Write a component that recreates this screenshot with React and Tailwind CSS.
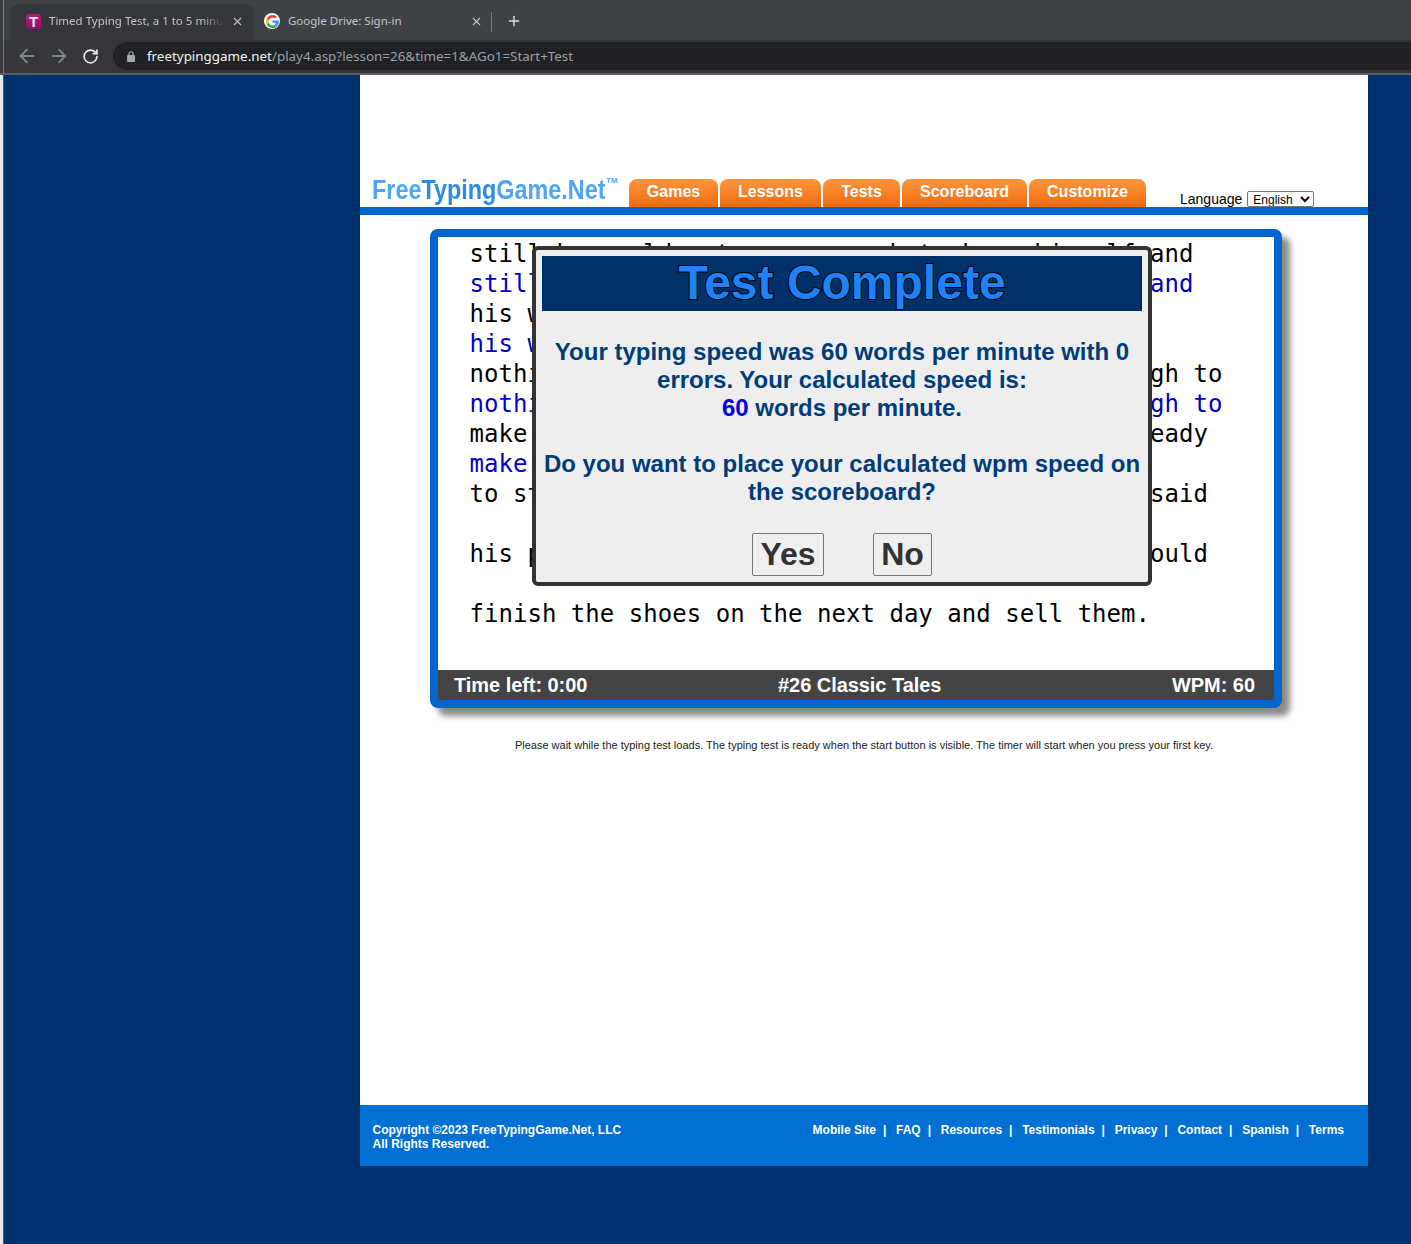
import React from "react";
import { ArrowLeft, ArrowRight, RotateCw, X, Plus } from "lucide-react";

const lines = [
  ["still he could not earn enough to keep himself and", "text-black"],
  ["still he could not earn enough to keep himself and", "text-[#0000c8]"],
  ["his wife. At last, they were very poor.", "text-black"],
  ["his wife. At last, they were very poor.", "text-[#0000c8]"],
  ["nothing left in the world but just leather enough to", "text-black"],
  ["nothing left in the world but just leather enough to", "text-[#0000c8]"],
  ["make one pair of shoes. He cut them out, then ready", "text-black"],
  ["make one pair of shoes.", "text-[#0000c8]"],
  ["to start on in the morning. Before bed he then said", "text-black"],
  [" ", "text-black"],
  ["his prayers and went to sleep, hoping that he would", "text-black"],
  [" ", "text-black"],
  ["finish the shoes on the next day and sell them.", "text-black"],
];

const tabs = [
  ["Games", "w-[89px]"],
  ["Lessons", "w-[101px]"],
  ["Tests", "w-[77px]"],
  ["Scoreboard", "w-[125px]"],
  ["Customize", "w-[117px]"],
];

const links = ["Mobile Site", "FAQ", "Resources", "Testimonials", "Privacy", "Contact", "Spanish"];

function GoogleG() {
  return (
    <span className="flex h-[16px] w-[16px] items-center justify-center rounded-full bg-white">
      <svg viewBox="0 0 48 48" className="h-[13px] w-[13px]">
        <path fill="#EA4335" d="M24 9.5c3.5 0 6.7 1.2 9.2 3.6l6.9-6.9C35.9 2.4 30.5 0 24 0 14.6 0 6.5 5.4 2.6 13.2l8 6.2C12.5 13.6 17.8 9.5 24 9.5z" />
        <path fill="#4285F4" d="M47 24.5c0-1.6-.1-3.1-.4-4.5H24v9h13c-.6 3-2.3 5.5-4.8 7.2l7.7 6C44.4 37.9 47 31.8 47 24.5z" />
        <path fill="#FBBC05" d="M10.5 28.6c-.5-1.4-.8-3-.8-4.6s.3-3.2.8-4.6l-8-6.2C.9 16.5 0 20.1 0 24s.9 7.5 2.6 10.8l7.9-6.2z" />
        <path fill="#34A853" d="M24 48c6.5 0 11.9-2.1 15.9-5.8l-7.7-6c-2.1 1.4-4.9 2.3-8.2 2.3-6.2 0-11.5-4.2-13.4-9.8l-8 6.2C6.5 42.6 14.6 48 24 48z" />
      </svg>
    </span>
  );
}

function LockIcon() {
  return (
    <svg viewBox="0 0 8 11" className="h-[11px] w-[8px] text-[#a6a9ab]">
      <path d="M2 4.5V2.8a2 2 0 0 1 4 0v1.7" fill="none" stroke="currentColor" strokeWidth="1.1" />
      <rect x="0" y="4" width="8" height="7" rx="1" fill="currentColor" />
    </svg>
  );
}

function BrowserChrome() {
  return (
    <div className="flex h-[75px] w-full shrink-0 overflow-hidden border-b-2 border-b-[#5a5c5f] bg-[#35363a] font-['Noto_Sans',sans-serif]">
      <div className="w-[3px] shrink-0 bg-[#3a3b3e]" />
      <div className="w-px shrink-0 bg-[#77797c]" />
      <div className="min-w-0 flex-1">
        <div className="flex h-[40px] items-end bg-[#3f4245] pl-[7px]">
          <div className="flex h-[36px] w-[242px] items-center rounded-t-[8px] bg-[#35363a] pb-[2px] pl-[15px] pr-[9px]">
            <span className="flex h-[15px] w-[15px] shrink-0 items-center justify-center rounded-[3px] bg-gradient-to-b from-[#b01e78] to-[#8c1464] font-['Liberation_Sans',sans-serif] text-[15px] font-bold leading-none text-[#f6e4ef]">T</span>
            <span className="ml-[8px] w-[174px] overflow-hidden whitespace-nowrap text-[11.5px] text-[#c4c7c9] [mask-image:linear-gradient(to_right,black_88%,transparent)]">Timed Typing Test, a 1 to 5 minute typing test</span>
            <X size={13} strokeWidth={2} className="ml-auto text-[#c4c7c9]" />
          </div>
          <div className="flex h-[36px] w-[238px] items-center pb-[2px] pl-[11px] pr-[8px]">
            <GoogleG />
            <span className="ml-[8px] whitespace-nowrap text-[11.5px] text-[#c4c7c9]">Google Drive: Sign-in</span>
            <X size={13} strokeWidth={2} className="ml-auto text-[#c4c7c9]" />
          </div>
          <div className="mb-[8px] h-[20px] w-px bg-[#74777a]" />
          <Plus size={16} strokeWidth={2} className="mb-[11px] ml-[14px] text-[#dfe1e3]" />
        </div>
        <div className="flex h-[32px] items-center pl-[12px]">
          <ArrowLeft size={22} strokeWidth={2} className="text-[#84878a]" />
          <ArrowRight size={22} strokeWidth={2} className="ml-[10px] text-[#84878a]" />
          <RotateCw size={17} strokeWidth={2.4} className="ml-[12px] text-[#e8eaed]" />
          <div className="ml-[14px] flex h-[28px] flex-1 items-center rounded-l-[14px] bg-[#202124] pl-[14px]">
            <LockIcon />
            <span className="ml-[12px] whitespace-nowrap text-[13.4px] text-[#9aa0a6]"><span className="text-[#f1f3f4]">freetypinggame.net</span>/play4.asp?lesson=26&amp;time=1&amp;AGo1=Start+Test</span>
          </div>
        </div>
      </div>
    </div>
  );
}

function Modal() {
  return (
    <div className="absolute left-[94px] top-[9px] flex h-[340px] w-[620px] flex-col items-center rounded-[6px] border-[4px] border-[#333333] bg-[#eeeeee] px-[6px] pt-[6px] text-center font-['Liberation_Sans',sans-serif] font-bold text-[#003c78]">
      <div className="h-[55px] w-[600px] shrink-0 bg-[#003068] text-[48px] leading-[54px] text-[#1e82fa] [-webkit-text-stroke:2px_#000000] [paint-order:stroke_fill]">Test Complete</div>
      <p className="mt-[27px] text-[24px] leading-[28px]">
        Your typing speed was 60 words per minute with 0<br />
        errors. Your calculated speed is:<br />
        <span className="text-[#0000e0]">60</span> words per minute.
      </p>
      <p className="mt-[28px] text-[24px] leading-[28px]">
        Do you want to place your calculated wpm speed on<br />
        the scoreboard?
      </p>
      <div className="mt-[27px] flex gap-[49px]">
        <button className="h-[43px] w-[72px] rounded-[2px] border border-[#777777] bg-[#efefef] pb-[2px] text-[32px] leading-none font-bold text-[#333333]">Yes</button>
        <button className="h-[43px] w-[59px] rounded-[2px] border border-[#777777] bg-[#efefef] pb-[2px] text-[32px] leading-none font-bold text-[#333333]">No</button>
      </div>
    </div>
  );
}

function GameBox() {
  return (
    <div className="relative ml-[70px] mt-[14px] flex h-[479px] w-[852px] flex-col rounded-[8px] border-[8px] border-[#0066cc] bg-white shadow-[8px_8px_6px_#8a8a8a]">
      <div className="flex-1 overflow-hidden pl-[31.5px] pt-[2px] font-['DejaVu_Sans_Mono',monospace] text-[24px] leading-[30px] tracking-[0.03px]">
        {lines.map(([t, c], i) => (
          <div key={i} className={`h-[30px] whitespace-pre ${c}`}>{t}</div>
        ))}
      </div>
      <div className="flex h-[30px] shrink-0 items-center justify-between bg-[#444444] pl-[16px] pr-[19px] font-['Liberation_Sans',sans-serif] text-[20px] font-bold tracking-[-0.05px] text-white">
        <span>Time left: 0:00</span>
        <span className="mr-[40px]">#26 Classic Tales</span>
        <span>WPM: 60</span>
      </div>
      <Modal />
    </div>
  );
}

export default function App() {
  return (
    <div className="flex h-[1244px] w-full flex-col overflow-hidden bg-[#003070]">
      <BrowserChrome />
      <div className="flex flex-1">
        <div className="h-full w-[3px] shrink-0 bg-[#e6e6ec]" />
        <div className="h-full w-px shrink-0 bg-[#555555]" />
        <div className="ml-[356px] flex h-[1091px] w-[1008px] flex-col bg-white font-['Liberation_Sans',sans-serif]">
          <div className="flex h-[132px] shrink-0 items-end pl-[12px]">
            <div className="relative mb-[1px] h-[32px] w-[257px] shrink-0 text-[28px] font-bold leading-[32px]">
              <div className="w-[280px] origin-left scale-x-[0.835] whitespace-nowrap">
                <span className="text-[#4fa5f5]">Free</span><span className="text-[#2a8ce8]">Typing</span><span className="text-[#4fa5f5]">Game.Net</span>
              </div>
              <span className="absolute left-[234px] top-[3px] text-[8px] leading-[8px] text-[#4fa5f5]">TM</span>
            </div>
            {tabs.map(([t, w]) => (
              <div key={t} className={`mr-[2px] flex h-[28px] items-center justify-center rounded-t-[8px] bg-gradient-to-b from-[#ff963c] to-[#f26a00] pb-[2px] text-[16px] font-bold text-white ${w}`}>{t}</div>
            ))}
            <div className="ml-[32px] flex items-center">
              <span className="text-[14px] leading-[16px] text-black">Language</span>
              <select className="ml-[5px] h-[16px] w-[67px] rounded-[2px] border border-[#767676] bg-white pl-[1px] text-[12px] leading-none text-black">
                <option>English</option>
              </select>
            </div>
          </div>
          <div className="h-[8px] shrink-0 bg-[#0066cc]" />
          <GameBox />
          <p className="mt-[30px] text-center text-[11px] leading-[14px] text-[#222222]">Please wait while the typing test loads. The typing test is ready when the start button is visible. The timer will start when you press your first key.</p>
          <div className="mt-auto flex h-[61px] shrink-0 items-start justify-between bg-[#0070d2] pl-[12.5px] pr-[24px] pt-[18px] text-[12px] font-bold leading-[14px] text-white">
            <div>Copyright ©2023 FreeTypingGame.Net, LLC<br />All Rights Reserved.</div>
            <div className="flex">
              {links.map((l) => (
                <span key={l} className="mr-[9.7px] flex">{l}<span className="ml-[7px]">|</span></span>
              ))}
              <span>Terms</span>
            </div>
          </div>
        </div>
      </div>
    </div>
  );
}
